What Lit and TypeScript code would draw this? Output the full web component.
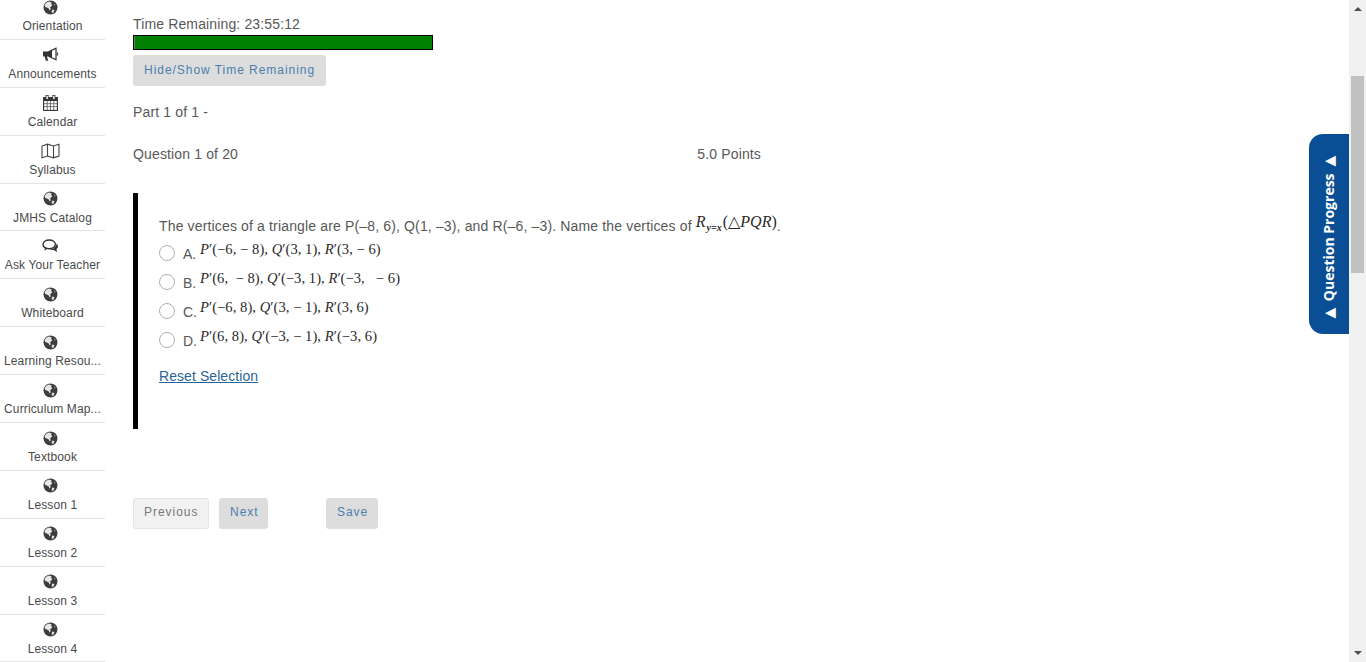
import { LitElement, html, css, svg } from "lit";
import { customElement } from "lit/decorators.js";

const globe = svg`<svg viewBox="0 0 15 15" width="15" height="15"><circle cx="7.5" cy="7.5" r="7" fill="#3d3d3d"/><path d="M3.2 2.8 6 1.6 8.8 2.4 8 4 9.4 5 8.2 6.4 7 7.4 7.8 9 6.4 10.4 5.8 8.6 3.8 7.4 2 6.8 1.6 5Z" fill="#e6e6e6"/><path d="M9.2 9.6 11.4 10 10.8 12.2 9.2 13 8.6 11.4Z" fill="#dedede"/><path d="M11 3.6 12.6 5 11.4 5.6Z" fill="#bbb"/></svg>`;
const megaphone = svg`<svg viewBox="0 0 17 15" width="17" height="15"><path d="M1 4.5h6v5H5l1.2 4.2H3.8L2.8 9.5H1Z" fill="#333"/><path d="M7 4.6 14 1.2V12.8L7 9.4Z" fill="#fff" stroke="#333" stroke-width="1.2"/><path d="M7 4.5 10 3v8L7 9.5Z" fill="#333"/><path d="M14.5 5.4h1.6v3.2h-1.6Z" fill="#555"/></svg>`;
const calendar = svg`<svg viewBox="0 0 15 16" width="15" height="16"><rect x=".6" y="2.6" width="13.8" height="12.8" fill="#fff" stroke="#333" stroke-width="1.1"/><path d="M1 3h13v3H1Z" fill="#333"/><path d="M1 8.7h13M1 11.6h13M4.2 6v9M7.5 6v9M10.8 6v9" stroke="#555" stroke-width=".8"/><rect x="3" y=".4" width="2.2" height="4.2" fill="#fff" stroke="#333" stroke-width=".8"/><rect x="9.8" y=".4" width="2.2" height="4.2" fill="#fff" stroke="#333" stroke-width=".8"/></svg>`;
const book = svg`<svg viewBox="0 0 19 16" width="19" height="16"><path d="M1 3 6.5 1.2 12.5 3 18 1.2V13L12.5 14.8 6.5 13 1 14.8ZM6.5 1.2V13M12.5 3V14.8" fill="none" stroke="#444" stroke-width="1.1"/></svg>`;
const chat = svg`<svg viewBox="0 0 17 14" width="17" height="14"><ellipse cx="7.2" cy="5.4" rx="6.2" ry="4.4" fill="#fff" stroke="#333" stroke-width="1.4"/><path d="M3 8.2 2.4 11.4 6.2 9.4Z" fill="#333"/><path d="M14.4 4.4C16.6 6 16.4 8.8 14.4 10L15.2 13 11.6 11C10 11.2 8.4 10.8 7.2 10.2 11 10.2 14.6 8.4 14.4 4.4Z" fill="#333"/></svg>`;

const nav: [string, unknown][] = [
  ["Orientation", globe], ["Announcements", megaphone], ["Calendar", calendar], ["Syllabus", book],
  ["JMHS Catalog", globe], ["Ask Your Teacher", chat], ["Whiteboard", globe], ["Learning Resou...", globe],
  ["Curriculum Map...", globe], ["Textbook", globe], ["Lesson 1", globe], ["Lesson 2", globe],
  ["Lesson 3", globe], ["Lesson 4", globe],
];

const options: [string, unknown][] = [
  ["A.", html`<i>P</i>′(−6, − 8), <i>Q</i>′(3, 1), <i>R</i>′(3, − 6)`],
  ["B.", html`<i>P</i>′(6, &nbsp;− 8), <i>Q</i>′(−3, 1), <i>R</i>′(−3, &nbsp;&nbsp;− 6)`],
  ["C.", html`<i>P</i>′(−6, 8), <i>Q</i>′(3, − 1), <i>R</i>′(3, 6)`],
  ["D.", html`<i>P</i>′(6, 8), <i>Q</i>′(−3, − 1), <i>R</i>′(−3, 6)`],
];

@customElement("app-root")
export class AppRoot extends LitElement {
  static styles = css`
    :host { display: block; height: 662px; overflow: hidden; position: relative; background: #fff;
      font-family: "Liberation Sans", Arial, sans-serif; color: #585858; font-size: 14px; letter-spacing: 0.14px; }
    .page { display: flex; height: 662px; }
    .side { width: 105px; flex: none; margin-top: -8px; }
    .item { height: 47.9px; box-sizing: border-box; border-bottom: 1px solid #e4e4e4; display: flex;
      flex-direction: column; align-items: center; padding-top: 8px; }
    .icon { height: 14px; width: 30px; margin-left: -4px; display: flex; align-items: center; justify-content: center; }
    .icon svg { flex: none; }
    .label { margin-top: 5px; font-size: 12px; line-height: 14px; color: #4a4a4a; white-space: nowrap; letter-spacing: 0.13px; }
    .main { flex: 1; padding: 16px 0 0 28px; min-width: 0; }
    .time { line-height: 16px; }
    .bar { width: 300px; height: 15px; box-sizing: border-box; border: 1px solid #000; background: #008000;
      box-shadow: inset 1px 0 0 #5f8f5f; margin-top: 3px; }
    .btn { display: inline-block; box-sizing: border-box; height: 31px; line-height: 30px; background: #ddd;
      border-radius: 3px; color: #4b7fae; font-size: 12px; letter-spacing: 0.96px; }
    .hide { margin-top: 5px; display: block; width: 193px; padding-left: 11px; white-space: nowrap; line-height: 31px; }
    .part { margin-top: 18px; line-height: 16px; }
    .qhead { margin-top: 26px; width: 628px; display: flex; justify-content: space-between; line-height: 16px; }
    .q { margin-top: 31px; height: 236px; box-sizing: border-box; border-left: 5px solid #000; padding: 23px 0 0 21px; }
    .stem { line-height: 20px; white-space: nowrap; display: flex; align-items: flex-start; letter-spacing: 0.15px; }
    .opts { margin-top: 6px; }
    .opt { display: flex; align-items: flex-start; height: 29px; }
    .radio { width: 16px; height: 16px; box-sizing: border-box; border: 1.5px solid #b0b0b0; border-radius: 50%; margin-top: 3px; background: #fff; }
    .letter { margin-left: 8px; line-height: 16px; margin-top: 4px; width: 17px; letter-spacing: 0; }
    .math { font-family: "Liberation Serif", serif; color: #2a2a2a; font-size: 14.6px; line-height: 16px; white-space: nowrap; letter-spacing: 0.04px; margin-top: -1px; }
    .reset { display: inline-block; margin-top: 10px; color: #2a6496; text-decoration: underline; line-height: 16px; letter-spacing: 0.07px; }
    .qm { font-size: 16px; margin-left: 4px; margin-top: -2px; }
    .sub { font-size: 10px; font-weight: bold; position: relative; top: 4px; margin: 0 1px; }
    .nav { margin-top: 69px; display: flex; align-items: flex-start; }
    .prev { background: #f2f2f2; border: 1px solid #e4e4e4; color: #777; width: 76px; padding-left: 10px; line-height: 27px; }
    .next { margin-left: 10px; width: 49px; padding-left: 11px; line-height: 28px; }
    .save { margin-left: 58px; width: 52px; padding-left: 11px; line-height: 28px; }
    .scroll { width: 17px; flex: none; background: #f1f1f1; position: relative; }
    .thumb { position: absolute; left: 2px; right: 2px; top: 76px; height: 197px; background: #c1c1c1; }
    .arrow { position: absolute; left: 5px; width: 0; height: 0; border: 4px solid transparent; }
    .down { bottom: 7px; border-top: 4px solid #505050; border-bottom: 0; }
    .up { top: 7px; border-bottom: 4px solid #505050; border-top: 0; }
    .tab { position: absolute; left: 1309px; top: 134px; width: 40px; height: 200px; background: #0a4f96; padding: 6px 1px 0 0;
      box-sizing: border-box; border-radius: 14px 0 0 14px; color: #fff; display: flex; align-items: center; justify-content: center; }
    .tab span { writing-mode: vertical-rl; text-orientation: sideways; transform: rotate(180deg);
      font-family: "Open Sans", sans-serif; font-weight: 700; font-size: 14px; white-space: nowrap; letter-spacing: 0; }
    .tab b { font-family: "DejaVu Sans", sans-serif; font-size: 14px; margin-inline: 3px; }
  `;

  render() {
    return html`
      <div class="page">
        <nav class="side">
          ${nav.map(([l, ic]) => html`<div class="item"><div class="icon">${ic}</div><div class="label">${l}</div></div>`)}
        </nav>
        <main class="main">
          <div class="time">Time Remaining: 23:55:12</div>
          <div class="bar"></div>
          <div class="btn hide">Hide/Show Time Remaining</div>
          <div class="part">Part 1 of 1 -</div>
          <div class="qhead"><span>Question 1 of 20</span><span>5.0 Points</span></div>
          <section class="q">
            <div class="stem">The vertices of a triangle are P(–8, 6), Q(1, –3), and R(–6, –3). Name the vertices of
              <span class="math qm"><i>R</i><span class="sub"><i>y=x</i></span>(△<i>PQR</i>)</span>.</div>
            <div class="opts">
              ${options.map(([a, m]) => html`<div class="opt"><span class="radio"></span><span class="letter">${a}</span><span class="math">${m}</span></div>`)}
            </div>
            <a class="reset">Reset Selection</a>
          </section>
          <div class="nav">
            <span class="btn prev">Previous</span><span class="btn next">Next</span><span class="btn save">Save</span>
          </div>
        </main>
        <div class="scroll"><div class="thumb"></div><div class="arrow up"></div><div class="arrow down"></div></div>
      </div>
      <div class="tab"><span><b>▲</b> Question Progress <b>▲</b></span></div>
    `;
  }
}
